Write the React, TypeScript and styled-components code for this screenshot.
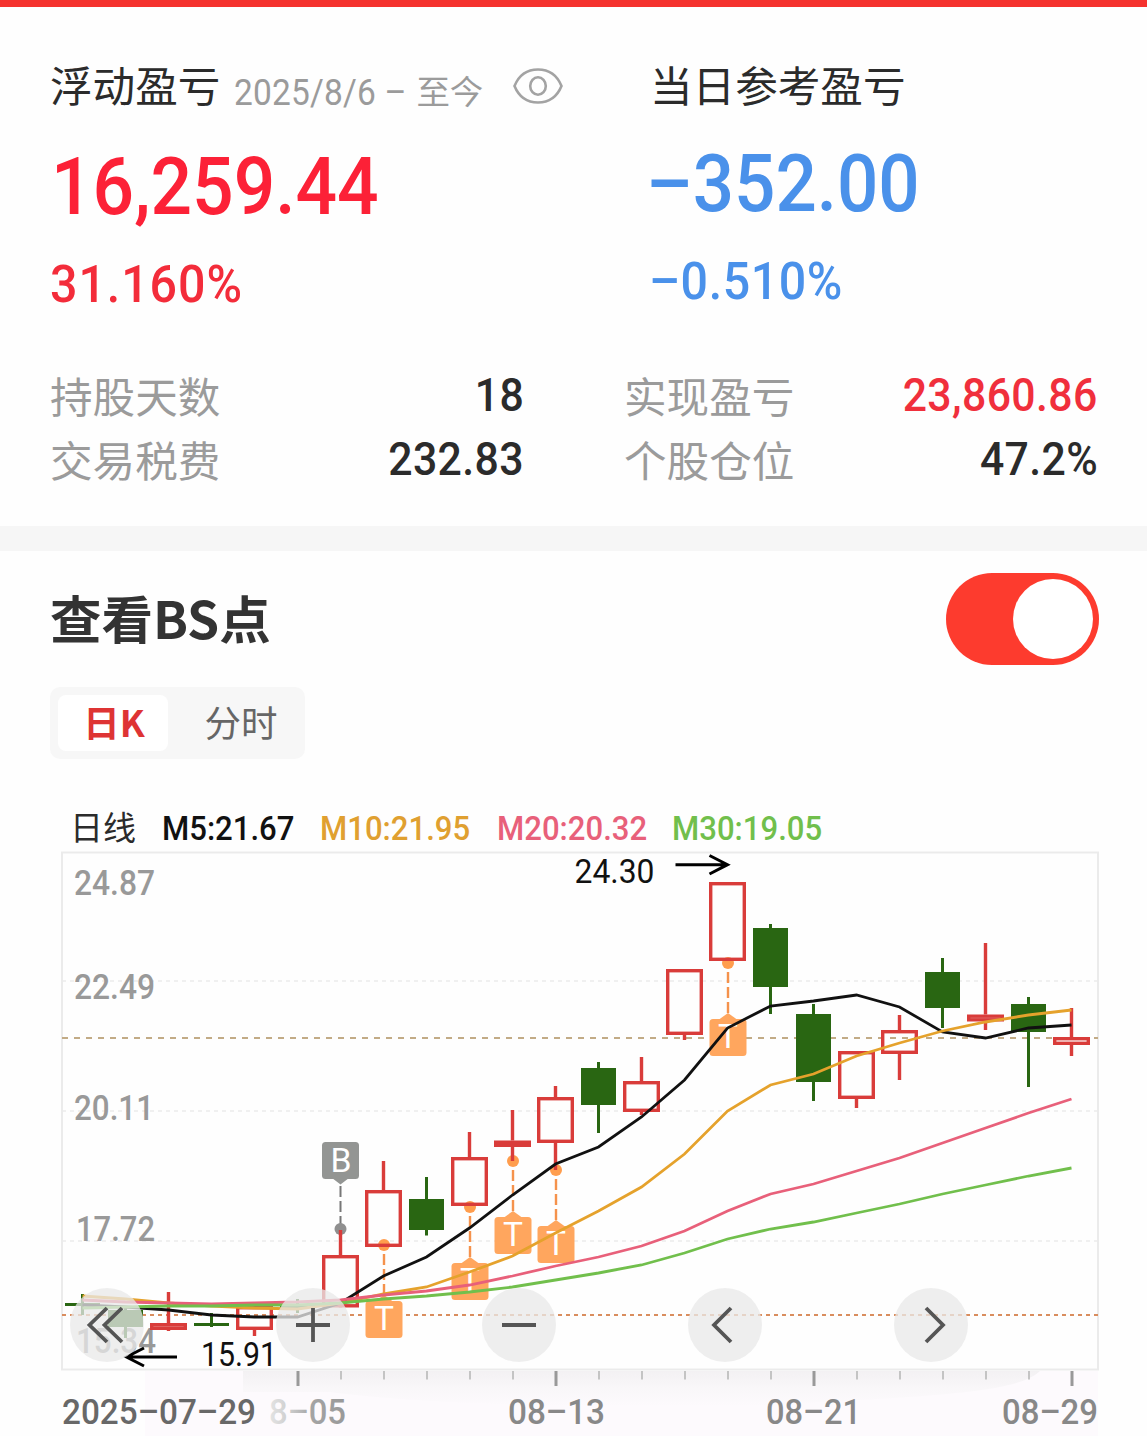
import React, { useState } from "react"
import styled, { createGlobalStyle } from "styled-components"

const GlobalStyle = createGlobalStyle`
	* {
		box-sizing: border-box;
	}

	body {
		margin: 0;
		background: #fefefe;
		font-family: "Noto Sans CJK SC", sans-serif;
		color: #2b2b2b;
	}
`

const Page = styled.main`
	width: 1147px;
	height: 1436px;
	overflow: hidden;
`

const TopBar = styled.div`
	height: 7px;
	background: #f5322e;
`

const Summary = styled.section`
	height: 519px;
	padding: 50px 49px 0 50px;
`

const Totals = styled.div`
	display: grid;
	grid-template-columns: 600px 1fr;
	height: 307px;
`

const TotalHead = styled.div`
	display: flex;
	align-items: center;
	height: 60px;
	white-space: nowrap;
`

const Label = styled.span`
	height: 60px;
	font-size: 42.6px;
	line-height: 54px;
`

const Range = styled.span`
	display: flex;
	flex: none;
	align-items: center;
	width: 293px;
	padding-left: 14px;
	font-size: 33.5px;
	line-height: 60px;
	color: #9b9b9b;
`

const RangeDate = styled.span`
	display: flex;
	width: 182px;
	padding-top: 12px;
`

const RangeEnd = styled.span`
	padding-top: 5px;
`

const EyeIcon = styled.svg`
	flex: none;
	width: 50px;
	height: 38px;
	margin-top: -2px;
`

// DIN-like digits: Roboto pulled in a little horizontally
const Num = styled.span<{ $size: number; $squeeze?: number; $color?: string; $weight?: number; $right?: boolean; $spacing?: number }>`
	display: inline-block;
	font-family: Roboto, sans-serif;
	font-size: ${p => p.$size}px;
	font-weight: ${p => p.$weight || 500};
	line-height: 1;
	letter-spacing: ${p => p.$spacing || 0}px;
	white-space: nowrap;
	color: ${p => p.$color || "inherit"};
	transform: scaleX(${p => p.$squeeze || 1});
	transform-origin: ${p => (p.$right ? "right" : "left")} center;
`

const Amount = styled.div<{ $top: number; $left?: number }>`
	height: 80px;
	margin-top: ${p => p.$top}px;
	margin-left: ${p => p.$left || 0}px;
`

const Percent = styled.div<{ $left?: number }>`
	height: 52px;
	margin-top: 32px;
	margin-left: ${p => p.$left || 0}px;
`

const Stats = styled.div`
	display: grid;
	grid-template-columns: 474px 474px;
	column-gap: 100px;
`

const Stat = styled.div`
	display: flex;
	justify-content: space-between;
	align-items: center;
	height: 64px;
	padding-bottom: 2px;
`

const StatLabel = styled.span`
	font-size: 42.6px;
	line-height: 60px;
	color: #9b9b9b;
`

const Divider = styled.div`
	height: 25px;
	background: #f6f6f6;
`

const Section = styled.section`
	padding-top: 22px;
`

const SectionHead = styled.div`
	display: flex;
	justify-content: space-between;
	align-items: center;
	height: 92px;
	padding: 0 48px 0 50px;
`

const Title = styled.h2`
	margin: 0;
	padding-bottom: 5px;
	font-size: 51.5px;
	line-height: 86px;
	font-weight: 700;
	color: #333;
`

const Toggle = styled.button<{ $on: boolean }>`
	display: flex;
	justify-content: ${p => (p.$on ? "flex-end" : "flex-start")};
	align-items: center;
	width: 153px;
	height: 92px;
	padding: 0 6px;
	border: 0;
	border-radius: 46px;
	background: ${p => (p.$on ? "#fd3b2e" : "#ddd")};
`

const Knob = styled.span`
	width: 80px;
	height: 80px;
	border-radius: 50%;
	background: #fff;
`

const Tabs = styled.div`
	display: flex;
	width: 255px;
	height: 72px;
	margin: 22px 0 0 50px;
	padding: 8px 0 8px 8px;
	border-radius: 10px;
	background: #f7f7f7;
`

const Tab = styled.button<{ $active: boolean }>`
	flex: none;
	width: ${p => (p.$active ? 110 : 137)}px;
	height: 56px;
	padding: ${p => (p.$active ? "0 0 3px 2px" : "0 0 3px 9px")};
	border: 0;
	border-radius: 8px;
	background: ${p => (p.$active ? "#fff" : "transparent")};
	font-family: inherit;
	font-size: 36.5px;
	line-height: 50px;
	font-weight: ${p => (p.$active ? 700 : 400)};
	color: ${p => (p.$active ? "#de3434" : "#666")};
`

const Legend = styled.div`
	display: grid;
	grid-template-columns: 92px 158px 177px 175px auto;
	align-items: center;
	height: 40px;
	margin-top: 48px;
	padding-left: 70px;
	font-size: 33px;
	line-height: 40px;
`

const LegendName = styled.span`
	height: 42px;
	line-height: 38px;
`

const ChartBox = styled.div`
	position: relative;
	height: 586px;
	margin-top: 3px;
`

const Chart = styled.svg`
	display: block;
	width: 1147px;
	height: 586px;
`

const Controls = styled.div`
	position: absolute;
	left: 70px;
	top: 438px;
	display: flex;
	gap: 132px;
`

const RoundButton = styled.button`
	width: 74px;
	height: 74px;
	padding: 0;
	border: 0;
	border-radius: 50%;
	background: rgba(232, 232, 232, 0.76);

	svg {
		display: block;
		width: 74px;
		height: 74px;
		fill: none;
		stroke: #555;
		stroke-width: 3.8;
	}
`

const RED = "#d93c3a"
const GREEN = "#296612"
const GREY = "#999"

const xAt = (i: number) => 82.5 + i * 43

// [high, low, body top, body bottom, rising]
type TCandle = [number, number, number, number, boolean]

const candles: TCandle[] = [
	[1294, 1315, 1303, 1306, false],
	[1306, 1338, 1310, 1327, false],
	[1292, 1331, 1323, 1330, true],
	[1313, 1327, 1323, 1326, false],
	[1306, 1336, 1306, 1330, true],
	[1299, 1313, 1305, 1308, false],
	[1230, 1307, 1255, 1307.5, true],
	[1161, 1247, 1190, 1247, true],
	[1177, 1235.5, 1199, 1230, false],
	[1132, 1206, 1157, 1206, true],
	[1110, 1161, 1140.5, 1147, true],
	[1086, 1170, 1097, 1143, true],
	[1062, 1133, 1068, 1105, false],
	[1057, 1115, 1081, 1112, true],
	[969, 1040, 969, 1035, true],
	[882, 961, 882, 961, true],
	[924, 1014, 928, 987, false],
	[1004, 1101, 1014, 1082, false],
	[1051, 1108, 1051, 1099, true],
	[1015, 1080, 1030, 1054, true],
	[958, 1028, 972, 1008, false],
	[943, 1030, 1014.5, 1021.5, true],
	[997, 1087, 1004, 1032, false],
	[1008, 1056, 1037, 1045, true],
]

const averages = [
	{
		color: "#111",
		points: [1305, 1307, 1310, 1315, 1317, 1317, 1303, 1276, 1257, 1228, 1195, 1164, 1147, 1117, 1080, 1028, 1006, 1001, 995, 1007, 1032, 1038, 1028, 1025],
	},
	{
		color: "#e5a22c",
		points: [1296, 1299, 1303, 1306, 1308, 1309, 1303, 1294, 1287, 1272, 1256, 1233, 1211, 1187, 1154, 1111, 1085, 1074, 1056, 1043, 1031, 1022, 1015, 1010],
	},
	{
		color: "#e8607a",
		points: [1300, 1302, 1303, 1304, 1303, 1302, 1300, 1295, 1291, 1285, 1276, 1266, 1257, 1246, 1231, 1211, 1194, 1184, 1171, 1158, 1143, 1128, 1113, 1099],
	},
	{
		color: "#71bf4c",
		points: [1308, 1307, 1306, 1306, 1305, 1305, 1303, 1299, 1296, 1292, 1287, 1280, 1273, 1265, 1253, 1239, 1229, 1222, 1213, 1204, 1194, 1185, 1176, 1168],
	},
]

// T markers: candle index, dot, top of the box
const trades = [
	[7, 1245, 1301],
	[9, 1207, 1263],
	[10, 1161, 1217],
	[11, 1170, 1226],
	[15, 963, 1019],
]

const priceLabels = [
	{ text: "24.87", x: 75, y: 894.5, w: 79 },
	{ text: "22.49", x: 75, y: 998.5, w: 79 },
	{ text: "20.11", x: 75, y: 1119.5, w: 78 },
	{ text: "17.72", x: 77, y: 1240.5, w: 77 },
	{ text: "15.34", x: 77, y: 1352.5, w: 78 },
]

const dateLabels = [
	{ text: "08–13", x: 509, w: 95 },
	{ text: "08–21", x: 767, w: 93 },
	{ text: "08–29", x: 1003, w: 94 },
]

interface IChartText {
	text: string
	x: number
	y: number
	w: number
	size?: number
	color?: string
	weight?: number
}

const ChartText = ({ text, x, y, w, size = 35.5, color = GREY, weight = 500 }: IChartText) => (
	<text
		x={x - 1}
		y={y}
		textLength={w + 2}
		lengthAdjust="spacingAndGlyphs"
		fontFamily="Roboto, sans-serif"
		fontSize={size}
		fontWeight={weight}
		fill={color}
	>
		{text}
	</text>
)

const Candle = ({ index, candle }: { index: number; candle: TCandle }) => {
	const [high, low, top, bottom, rising] = candle
	const x = xAt(index)

	if (!rising) {
		return (
			<g fill={GREEN}>
				<rect x={x - 1.5} y={high} width={3} height={low - high} />
				<rect x={x - 17.5} y={top} width={35} height={bottom - top} />
			</g>
		)
	}
	return (
		<g stroke={RED} strokeWidth={3.4} fill="none">
			<path d={`M${x} ${high}V${top}M${x} ${bottom}V${low}`} />
			<rect x={x - 16.8} y={top + 1.7} width={33.6} height={Math.max(bottom - top - 3.4, 1)} />
		</g>
	)
}

const KLine = () => (
	<Chart viewBox="0 850 1147 586">
		<defs>
			<linearGradient id="axisFade" x1="0" y1="0" x2="0" y2="1">
				<stop offset="0" stopColor="#f3f1f3" />
				<stop offset="0.5" stopColor="#f9f7f9" />
				<stop offset="1" stopColor="#fdfafd" />
			</linearGradient>
			<linearGradient id="dateFade" x1="0" y1="0" x2="1" y2="0">
				<stop offset="0" stopColor="#e4e4e4" />
				<stop offset="0.25" stopColor="#cfcfcf" />
				<stop offset="0.55" stopColor="#a4a4a4" />
				<stop offset="1" stopColor="#999" />
			</linearGradient>
		</defs>
		<rect x={145} y={1371} width={953} height={65} fill="#fdfafd" />
		<path d="M243 1371H1040C1020 1390 960 1396 760 1405C600 1409 430 1405 330 1392H243Z" fill="url(#axisFade)" />
		<path d="M62 852.5H1098V1369.5H62Z" fill="none" stroke="#ebebeb" strokeWidth={2} />
		{[981, 1111, 1241].map((y) => (
			<path key={y} d={`M62 ${y}H1098`} stroke="#ececec" strokeWidth={1.6} strokeDasharray="4 4" />
		))}
		<path d="M62 1038H1098" stroke="#c2ab86" strokeWidth={2} strokeDasharray="6 6" />
		<path d="M62 1315H1098" stroke="#d98d5e" strokeWidth={2} strokeDasharray="4 4" />

		{priceLabels.map((label) => <ChartText key={label.text} {...label} />)}

		<g>
			<path d="M340.5 1186V1228" stroke="#777" strokeWidth={2} strokeDasharray="11 4" />
			<circle cx={340.5} cy={1229} r={6} fill="#8f8f8f" />
			<path d="M332 1178H349L340.5 1184.5Z" fill="#939593" />
			<rect x={322} y={1142} width={37} height={37} rx={3.5} fill="#939593" />
			<ChartText text="B" x={331.5} y={1171.5} w={19} size={33} color="#fff" weight={400} />
		</g>
		{trades.map(([index, dot, top]) => {
			const x = xAt(index) + 0.5
			return (
				<g key={index}>
					<path d={`M${x} ${dot + 9}V${top - 4}`} stroke="#f5924c" strokeWidth={2.4} strokeDasharray="11 4" />
					<circle cx={x} cy={dot} r={6} fill="#ff9d4d" />
					<path d={`M${x - 9} ${top + 0.5}L${x} ${top - 6}L${x + 9} ${top + 0.5}Z`} fill="#ffa65e" />
					<rect x={x - 18.5} y={top} width={37} height={37} rx={3.5} fill="#ffa65e" />
					<ChartText text="T" x={x - 9} y={top + 28.5} w={18} size={33} color="#fff" weight={400} />
				</g>
			)
		})}

		{candles.map((candle, i) => <Candle key={i} index={i} candle={candle} />)}

		{averages.map(({ color, points }) => (
			<polyline
				key={color}
				points={points.map((y, i) => `${xAt(i)},${y}`).join(" ")}
				fill="none"
				stroke={color}
				strokeWidth={2.8}
			/>
		))}

		<ChartText text="24.30" x={575.5} y={882.5} w={78} size={33} color="#111" weight={400} />
		<path d="M675.5 864.7H727M709.5 855.5L727.5 864.7L709.5 874" fill="none" stroke="#000" strokeWidth={3} />
		<ChartText text="15.91" x={202} y={1365.5} w={74} size={33} color="#111" weight={400} />
		<path d="M177 1357H127M144 1348L126.500 1357L144 1366" fill="none" stroke="#000" strokeWidth={3} />

		{candles.map((_, i) => {
			if (i < 5) return null
			const major = (i - 5) % 6 === 0
			return (
				<path
					key={i}
					d={`M${xAt(i) + 0.5} 1371V${major ? 1386 : 1379.5}`}
					stroke={major ? "#999" : "#c4c4c4"}
					strokeWidth={major ? 3 : 2}
				/>
			)
		})}

		<ChartText text="8–05" x={270} y={1424} w={75} color="url(#dateFade)" />
		<ChartText text="2025–07–29" x={63} y={1424} w={192} color="#686868" />
		{dateLabels.map((label) => <ChartText key={label.text} {...label} y={1424} color="#888" />)}
	</Chart>
)

const controlIcons = [
	{ name: "first", d: "M37 20L19.500 37L37 54M52 20L34.500 37L52 54" },
	{ name: "zoom in", d: "M20 37H54M37 20V54" },
	{ name: "zoom out", d: "M20 37H54" },
	{ name: "previous", d: "M43 20L26 37L43 54" },
	{ name: "next", d: "M32 20L49 37L32 54" },
]

const stats = [
	{ label: "持股天数", value: "18" },
	{ label: "实现盈亏", value: "23,860.86", color: "#f02f3c" },
	{ label: "交易税费", value: "232.83" },
	{ label: "个股仓位", value: "47.2%" },
]

export default function App() {
	const [showPoints, setShowPoints] = useState(true)
	const [tab, setTab] = useState("日K")

	return (
		<Page>
			<GlobalStyle />
			<TopBar />
			<Summary>
				<Totals>
					<div>
						<TotalHead>
							<Label>浮动盈亏</Label>
							<Range>
								<RangeDate><Num $size={36} $squeeze={0.93} $weight={400} $spacing={0.2}>2025/8/6 –</Num></RangeDate>
								<RangeEnd>至今</RangeEnd>
							</Range>
							<EyeIcon viewBox="0 0 50 38" fill="none" stroke="#a3a3a3" strokeWidth={2.6}>
								<path d="M1.500 19C6 8 14 2.500 25 2.500S44 8 48.500 19C44 30 36 35.500 25 35.500S6 30 1.500 19Z" />
								<ellipse cx={25} cy={19} rx={7.800} ry={8.800} />
							</EyeIcon>
						</TotalHead>
						<Amount $top={30} $left={1}><Num $size={79.5} $squeeze={0.92} $color="#fc2137">16,259.44</Num></Amount>
						<Percent><Num $size={52} $squeeze={0.93} $spacing={1} $color="#f32c3a">31.160%</Num></Percent>
					</div>
					<div>
						<TotalHead>
							<Label>当日参考盈亏</Label>
						</TotalHead>
						<Amount $top={27} $left={-4}><Num $size={79.5} $squeeze={0.915} $color="#4a91ea">–352.00</Num></Amount>
						<Percent $left={-1}><Num $size={52} $squeeze={0.93} $spacing={0.6} $color="#4a91ea">–0.510%</Num></Percent>
					</div>
				</Totals>
				<Stats>
					{stats.map(({ label, value, color }) => (
						<Stat key={label}>
							<StatLabel>{label}</StatLabel>
							<Num $size={46} $squeeze={0.93} $spacing={0.4} $color={color} $right>{value}</Num>
						</Stat>
					))}
				</Stats>
			</Summary>
			<Divider />
			<Section>
				<SectionHead>
					<Title>查看BS点</Title>
					<Toggle $on={showPoints} onClick={() => setShowPoints(!showPoints)}>
						<Knob />
					</Toggle>
				</SectionHead>
				<Tabs>
					{["日K", "分时"].map((name) => (
						<Tab key={name} $active={tab === name} onClick={() => setTab(name)}>{name}</Tab>
					))}
				</Tabs>
				<Legend>
					<LegendName>日线</LegendName>
					<Num $size={34} $squeeze={0.915} $color="#111">M5:21.67</Num>
					<Num $size={34} $squeeze={0.915} $color="#e0a030">M10:21.95</Num>
					<Num $size={34} $squeeze={0.915} $color="#e8607a">M20:20.32</Num>
					<Num $size={34} $squeeze={0.915} $color="#71bf4c">M30:19.05</Num>
				</Legend>
				<ChartBox>
					<KLine />
					<Controls>
						{controlIcons.map(({ name, d }) => (
							<RoundButton key={name} aria-label={name}>
								<svg viewBox="0 0 74 74"><path d={d} /></svg>
							</RoundButton>
						))}
					</Controls>
				</ChartBox>
			</Section>
		</Page>
	)
}
